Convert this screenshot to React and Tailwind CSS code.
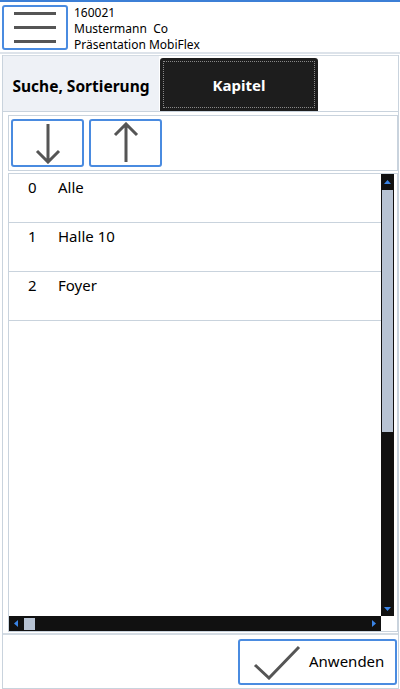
import React from "react";

const rows = [
  { nr: "0", name: "Alle" },
  { nr: "1", name: "Halle 10" },
  { nr: "2", name: "Foyer" },
];

function Tri({ dir }) {
  // tiny blue scroll arrow
  const pts = {
    up: "0,4 3.5,0 7,4",
    down: "0,0 3.5,4 7,0",
    left: "4,0 0,3.5 4,7",
    right: "0,0 4,3.5 0,7",
  }[dir];
  const w = dir === "up" || dir === "down" ? 7 : 4;
  const h = dir === "up" || dir === "down" ? 4 : 7;
  return (
    <svg width={w} height={h} viewBox={`0 0 ${w} ${h}`}>
      <polygon points={pts} fill="#3a84e6" />
    </svg>
  );
}

export default function App() {
  return (
    <div className="w-[400px] h-[689px] flex flex-col bg-white text-black font-['Noto_Sans',sans-serif] overflow-hidden">
      <div className="h-[2px] bg-[#3c7fd6]" />

      {/* header */}
      <div className="h-[52px] flex items-start pt-[3px] pl-[2px] gap-[6px] border-b-2 border-[#dde3ea]">
        <button className="w-[66px] h-[45px] border-2 border-[#4a8be0] rounded-[3px] flex flex-col justify-center items-center gap-[11px] bg-white">
          <span className="block w-[42px] h-[3px] bg-[#555]" />
          <span className="block w-[42px] h-[3px] bg-[#555]" />
          <span className="block w-[42px] h-[3px] bg-[#555]" />
        </button>
        <div className="text-[12px] leading-[16px]">
          <div>160021</div>
          <div>Mustermann&nbsp; Co</div>
          <div>Präsentation MobiFlex</div>
        </div>
      </div>

      {/* main panel */}
      <div className="flex-1 flex flex-col ml-[2px] mr-[1px] mt-[1px] border-x border-b border-[#c9d3dd]">
        {/* tabs */}
        <div className="h-[56px] flex border-t border-[#d3dbe3]">
          <div className="w-[156px] bg-[#eef1f6] flex items-center justify-center pt-[6px] text-[15.5px] font-bold">
            Suche, Sortierung
          </div>
          <div className="w-[158px] mt-[2px] ml-[1px] bg-[#1d1d1d] rounded-t-[3px] p-[3px] flex">
            <div className="flex-1 border border-dotted border-[#888] flex items-center justify-center text-white text-[15px] font-bold pt-[2px]">
              Kapitel
            </div>
          </div>
          <div className="flex-1" />
        </div>

        {/* content */}
        <div className="flex-1 flex flex-col border-t border-[#c9d3dd] pl-[5px] pr-0 pt-[3px] pb-[1px]">
          <div className="h-[56px] border border-[#c9d3dd] flex items-center gap-[5px] px-[2px]">
            <button className="w-[73px] h-[48px] border-2 border-[#4a8be0] rounded-[3px] bg-white flex items-center justify-center">
              <svg width="28" height="42" viewBox="0 0 28 42">
                <path d="M14 2 V40 M3 29 L14 40 L25 29" fill="none" stroke="#555" strokeWidth="3" />
              </svg>
            </button>
            <button className="w-[73px] h-[48px] border-2 border-[#4a8be0] rounded-[3px] bg-white flex items-center justify-center">
              <svg width="28" height="42" viewBox="0 0 28 42">
                <path d="M14 40 V2 M3 13 L14 2 L25 13" fill="none" stroke="#555" strokeWidth="3" />
              </svg>
            </button>
          </div>

          <div className="flex-1 mt-[2px] border border-[#c9d3dd] flex flex-col pr-[3px]">
            <div className="flex-1 flex">
              <div className="flex-1">
                {rows.map((r) => (
                  <div
                    key={r.nr}
                    className="h-[49px] border-b border-[#c9d3dd] flex items-start pt-[3px] text-[15px] leading-[20px]"
                  >
                    <span className="w-[49px] pl-[19px]">{r.nr}</span>
                    <span>{r.name}</span>
                  </div>
                ))}
              </div>
              <div className="w-[13px] bg-[#111] flex flex-col items-center">
                <div className="h-[16px] flex items-center justify-center">
                  <Tri dir="up" />
                </div>
                <div className="w-[11px] h-[242px] bg-[#b7c3d3]" />
                <div className="flex-1" />
                <div className="h-[14px] flex items-center justify-center">
                  <Tri dir="down" />
                </div>
              </div>
            </div>
            <div className="h-[15px] flex">
              <div className="flex-1 bg-[#111] flex items-center px-[5px]">
                <Tri dir="left" />
                <div className="ml-[6px] w-[11px] h-[12px] bg-[#b7c3d3]" />
                <div className="flex-1" />
                <Tri dir="right" />
              </div>
              <div className="w-[13px] bg-white" />
            </div>
          </div>
        </div>

        {/* footer */}
        <div className="h-[55px] border-t-2 border-[#d3dbe3] flex items-center justify-end pr-[1px]">
          <button className="w-[159px] h-[46px] border-2 border-[#4a8be0] rounded-[3px] bg-white flex items-center pl-[13px] gap-[8px]">
            <svg width="48" height="36" viewBox="0 0 48 36">
              <path d="M2 21 L16 34 L46 3" fill="none" stroke="#555" strokeWidth="3" />
            </svg>
            <span className="text-[15px]">Anwenden</span>
          </button>
        </div>
      </div>
    </div>
  );
}
